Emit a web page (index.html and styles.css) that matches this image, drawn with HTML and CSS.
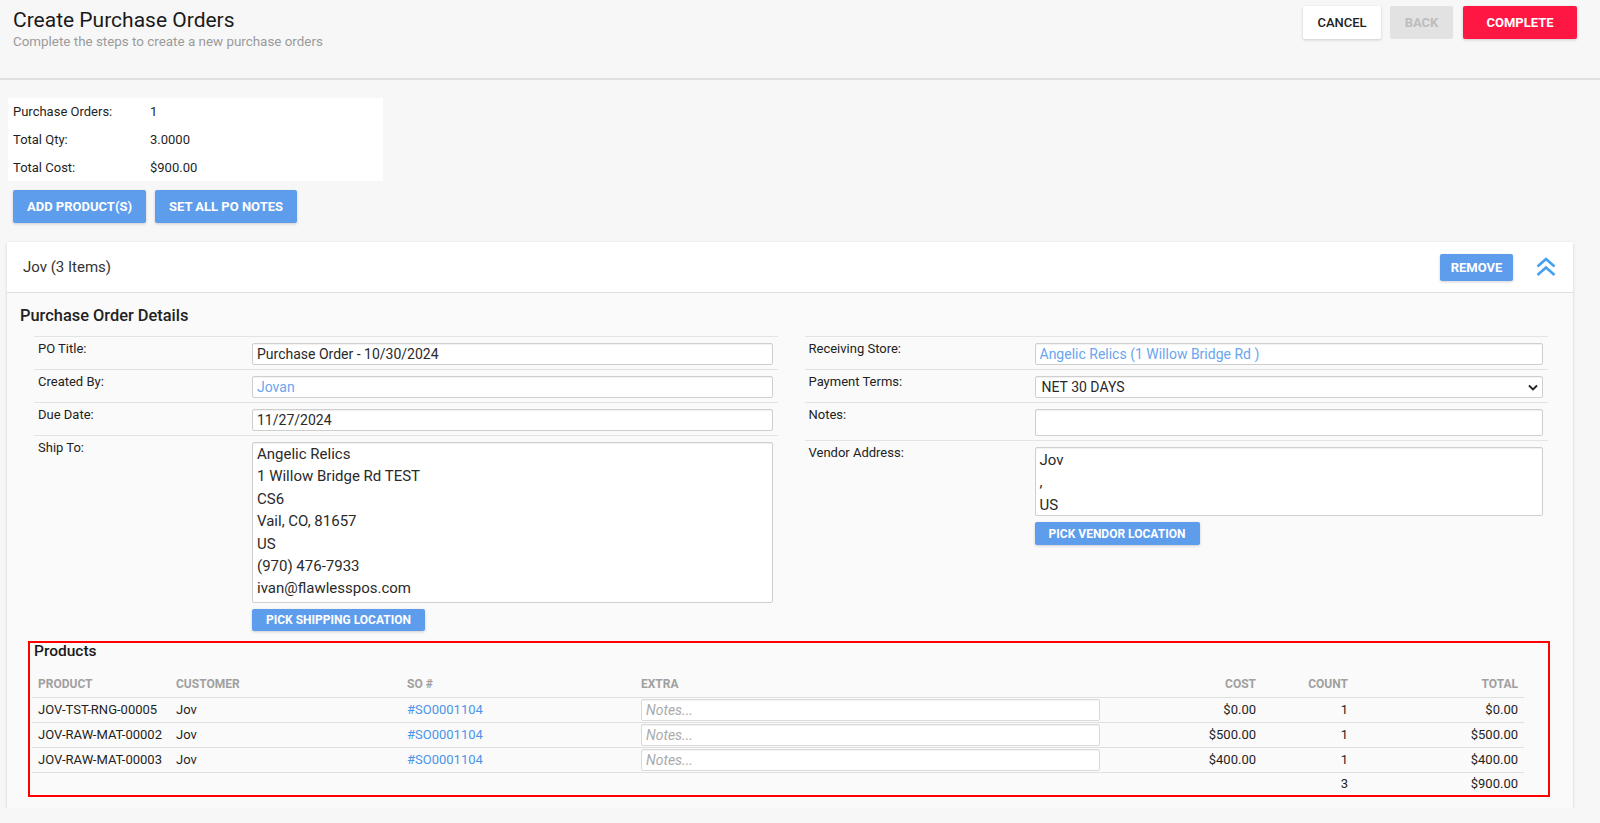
FILE: index.html
```html
<!DOCTYPE html>
<html lang="en">
<head>
<meta charset="utf-8">
<title>Create Purchase Orders</title>
<link rel="stylesheet" href="styles.css">
</head>
<body>
<header class="page-header">
  <div class="titles">
    <h1 class="title">Create Purchase Orders</h1>
    <p class="subtitle">Complete the steps to create a new purchase orders</p>
  </div>
  <div class="actions">
    <button class="btn btn-cancel">Cancel</button>
    <button class="btn btn-back">Back</button>
    <button class="btn btn-complete">Complete</button>
  </div>
</header>

<main class="content">
  <div class="summary">
    <span>Purchase Orders:</span><span>1</span>
    <span>Total Qty:</span><span>3.0000</span>
    <span>Total Cost:</span><span>$900.00</span>
  </div>

  <div class="toolbar">
    <button class="btn btn-blue btn-add">Add Product(s)</button>
    <button class="btn btn-blue btn-notes">Set All PO Notes</button>
  </div>

  <section class="card">
    <div class="card-head">
      <span class="card-title">Jov (3 Items)</span>
      <button class="btn btn-blue btn-remove">Remove</button>
      <svg class="collapse-icon" width="22" height="20" viewBox="0 0 22 20" aria-hidden="true">
        <polyline points="2.5,9.5 11,2 19.5,9.5" fill="none" stroke="#45a0f2" stroke-width="2.6" stroke-linejoin="miter"/>
        <polyline points="2.5,18 11,10.5 19.5,18" fill="none" stroke="#45a0f2" stroke-width="2.6" stroke-linejoin="miter"/>
      </svg>
    </div>

    <div class="card-body">
      <h2 class="section-title">Purchase Order Details</h2>

      <div class="details">
        <div class="col col-left">
          <div class="row">
            <label class="lbl">PO Title:</label>
            <input class="field" type="text" value="Purchase Order - 10/30/2024">
          </div>
          <div class="row">
            <label class="lbl">Created By:</label>
            <input class="field field-link" type="text" value="Jovan">
          </div>
          <div class="row">
            <label class="lbl">Due Date:</label>
            <input class="field" type="text" value="11/27/2024">
          </div>
          <div class="row">
            <label class="lbl">Ship To:</label>
            <div class="stack">
              <textarea class="area area-ship">Angelic Relics
1 Willow Bridge Rd TEST
CS6
Vail, CO, 81657
US
(970) 476-7933
ivan@flawlesspos.com</textarea>
              <button class="btn btn-blue btn-small btn-ship">Pick Shipping Location</button>
            </div>
          </div>
        </div>

        <div class="col col-right">
          <div class="row">
            <label class="lbl">Receiving Store:</label>
            <input class="field field-link" type="text" value="Angelic Relics (1 Willow Bridge Rd )">
          </div>
          <div class="row">
            <label class="lbl">Payment Terms:</label>
            <div class="field select-box">
              <span>NET 30 DAYS</span>
              <svg class="select-caret" width="10" height="7" viewBox="0 0 10 7" aria-hidden="true">
                <polyline points="1,1.5 5,5.5 9,1.5" fill="none" stroke="#222" stroke-width="1.8"/>
              </svg>
            </div>
          </div>
          <div class="row">
            <label class="lbl">Notes:</label>
            <textarea class="area area-notes"></textarea>
          </div>
          <div class="row">
            <label class="lbl">Vendor Address:</label>
            <div class="stack">
              <textarea class="area area-vendor">Jov
,
US</textarea>
              <button class="btn btn-blue btn-small btn-vendor">Pick Vendor Location</button>
            </div>
          </div>
        </div>
      </div>

      <div class="products">
        <h3 class="products-title">Products</h3>
        <table class="ptable">
          <colgroup>
            <col class="c-product"><col class="c-customer"><col class="c-so"><col class="c-extra"><col class="c-cost"><col class="c-count"><col class="c-total">
          </colgroup>
          <thead>
            <tr>
              <th>Product</th><th>Customer</th><th>SO #</th><th>Extra</th><th class="num">Cost</th><th class="num">Count</th><th class="num">Total</th>
            </tr>
          </thead>
          <tbody>
            <tr>
              <td>JOV-TST-RNG-00005</td><td>Jov</td><td><a class="so-link">#SO0001104</a></td>
              <td><input class="note-input" type="text" placeholder="Notes..."></td>
              <td class="num">$0.00</td><td class="num">1</td><td class="num">$0.00</td>
            </tr>
            <tr>
              <td>JOV-RAW-MAT-00002</td><td>Jov</td><td><a class="so-link">#SO0001104</a></td>
              <td><input class="note-input" type="text" placeholder="Notes..."></td>
              <td class="num">$500.00</td><td class="num">1</td><td class="num">$500.00</td>
            </tr>
            <tr>
              <td>JOV-RAW-MAT-00003</td><td>Jov</td><td><a class="so-link">#SO0001104</a></td>
              <td><input class="note-input" type="text" placeholder="Notes..."></td>
              <td class="num">$400.00</td><td class="num">1</td><td class="num">$400.00</td>
            </tr>
            <tr class="total-row">
              <td></td><td></td><td></td><td></td><td></td><td class="num">3</td><td class="num">$900.00</td>
            </tr>
          </tbody>
        </table>
      </div>
    </div>
  </section>
</main>
</body>
</html>
```

FILE: styles.css
```css
* { box-sizing: border-box; }

body {
  margin: 0;
  background: #f7f7f7;
  font-family: Roboto, "Liberation Sans", Arial, sans-serif;
  color: #212121;
}

/* ---------- header ---------- */
.page-header {
  display: flex;
  justify-content: space-between;
  align-items: flex-start;
  height: 80px;
  padding: 0 23px 0 13px;
  border-bottom: 2px solid #e0e0e0;
}
.title {
  margin: 0;
  padding-top: 7px;
  font-size: 21px;
  line-height: 26px;
  font-weight: 400;
  color: #1a1a1a;
}
.subtitle {
  margin: 0;
  font-size: 13.4px;
  line-height: 18px;
  color: #9a9a9a;
}
.actions {
  display: flex;
  gap: 9px;
  padding-top: 6px;
}

/* ---------- buttons ---------- */
.btn {
  height: 33px;
  border: 0;
  border-radius: 2px;
  padding: 0;
  font-family: Roboto, "Liberation Sans", Arial, sans-serif;
  font-size: 13px;
  font-weight: 700;
  text-transform: uppercase;
  cursor: pointer;
  box-shadow: 0 1px 3px rgba(0, 0, 0, 0.18);
}
.btn-cancel {
  width: 78px;
  background: #fff;
  color: #222;
  font-weight: 500;
}
.btn-back {
  width: 63px;
  background: #e2e2e2;
  color: #bdbdbd;
  box-shadow: none;
}
.btn-complete {
  width: 114px;
  margin-left: 1px;
  background: #ff1744;
  color: #fff;
}
.btn-blue {
  background: #5e9cec;
  color: #fff;
}
.btn-add { width: 133px; }
.btn-notes { width: 142px; }
.btn-remove {
  width: 73px;
  height: 27px;
  margin-left: auto;
}
.btn-small {
  height: 22px;
  font-size: 12px;
}
.btn-ship { width: 173px; }
.btn-vendor { width: 165px; height: 23px; }

/* ---------- summary ---------- */
.content {
  padding: 18px 27px 0 8px;
}
.summary {
  display: grid;
  grid-template-columns: 137px 1fr;
  grid-template-rows: repeat(3, 1fr);
  align-items: center;
  width: 375px;
  height: 83px;
  padding-left: 5px;
  background: #fff;
  font-size: 13px;
  color: #1f1f1f;
}
.toolbar {
  display: flex;
  gap: 9px;
  margin-top: 9px;
  padding-left: 5px;
}

/* ---------- card ---------- */
.card {
  margin: 19px 0 0 -1px;
  background: #fafafa;
  box-shadow: 0 1px 3px rgba(0, 0, 0, 0.16);
}
.card-head {
  display: flex;
  align-items: center;
  height: 51px;
  padding: 0 16px;
  background: #fff;
  border-bottom: 1px solid #e0e0e0;
}
.card-title {
  font-size: 15px;
  color: #333;
}
.collapse-icon {
  margin-left: 22px;
  display: block;
}
.card-body {
  padding: 0 23px 11px 13px;
}
.section-title {
  margin: 0;
  padding-top: 13px;
  font-size: 16.4px;
  line-height: 20px;
  font-weight: 500;
  color: #222;
}

/* ---------- details ---------- */
.details {
  display: grid;
  grid-template-columns: 1fr 1fr;
  column-gap: 27px;
  align-items: start;
  margin: 10px 2px 0 14px;
}
.row {
  display: grid;
  align-items: start;
  padding: 3px 5px 4px 4px;
  border-top: 1px solid #e3e3e3;
}
.col-left .row { grid-template-columns: 214px 1fr; }
.col-right .row { grid-template-columns: 226px 1fr; }
.lbl {
  font-size: 13px;
  line-height: 18px;
  color: #222;
}
.field {
  display: block;
  width: 100%;
  height: 22px;
  margin-top: 3px;
  padding: 0 4px;
  border: 1px solid #cfcfcf;
  border-radius: 2px;
  background: #fff;
  box-shadow: inset 0 1px 1px rgba(0, 0, 0, 0.06);
  font-family: Roboto, "Liberation Sans", Arial, sans-serif;
  font-size: 14px;
  color: #2a2a2a;
  outline: none;
}
.field-link { color: #6aa5ee; }
.select-box {
  position: relative;
  display: flex;
  align-items: center;
  padding-left: 6px;
}
.select-caret {
  position: absolute;
  right: 4px;
  top: 7px;
}
.stack {
  display: flex;
  flex-direction: column;
  align-items: flex-start;
  gap: 6px;
  margin-top: 3px;
}
.area {
  display: block;
  width: 100%;
  padding: 0 4px;
  border: 1px solid #cfcfcf;
  border-radius: 2px;
  background: #fff;
  box-shadow: inset 0 1px 1px rgba(0, 0, 0, 0.06);
  font-family: Roboto, "Liberation Sans", Arial, sans-serif;
  font-size: 15px;
  line-height: 22.4px;
  color: #2a2a2a;
  resize: none;
  overflow: hidden;
  outline: none;
}
.area-ship { height: 161px; }
.area-notes { height: 27px; margin-top: 3px; }
.area-vendor { height: 69px; padding-top: 1px; }

/* ---------- products ---------- */
.products {
  margin: 6px 0 0 8px;
  padding: 0 0 0 2px;
  border: 2px solid #ff0000;
}
.products-title {
  margin: 0 0 0 2px;
  font-size: 15.5px;
  line-height: 17px;
  font-weight: 500;
  color: #1a1a1a;
}
.ptable {
  width: 1492px;
  margin-top: 12px;
  table-layout: fixed;
  border-collapse: collapse;
  font-size: 13px;
  color: #1f1f1f;
}
.c-product { width: 138px; }
.c-customer { width: 231px; }
.c-so { width: 234px; }
.c-extra { width: 471px; }
.c-cost { width: 156px; }
.c-count { width: 92px; }
.c-total { width: 170px; }
.ptable th,
.ptable td {
  padding: 0 6px;
  vertical-align: middle;
  text-align: left;
  white-space: nowrap;
}
.ptable th {
  height: 25px;
  font-size: 12px;
  font-weight: 700;
  color: #a0a0a0;
  text-transform: uppercase;
  border-bottom: 1px solid #e0e0e0;
}
.ptable td {
  height: 25px;
  border-bottom: 1px solid #e0e0e0;
}
.ptable .num { text-align: right; }
.ptable .total-row td {
  height: 23px;
  border-bottom: 0;
}
.so-link {
  color: #4d94e8;
  text-decoration: none;
}
.note-input {
  display: block;
  width: 100%;
  height: 22px;
  padding: 0 4px;
  border: 1px solid #dadada;
  border-radius: 2px;
  background: #fff;
  box-shadow: inset 0 1px 1px rgba(0, 0, 0, 0.05);
  font-family: Roboto, "Liberation Sans", Arial, sans-serif;
  font-size: 14px;
  font-style: italic;
  outline: none;
}
.note-input::placeholder {
  color: #ababab;
  font-style: italic;
}
```
